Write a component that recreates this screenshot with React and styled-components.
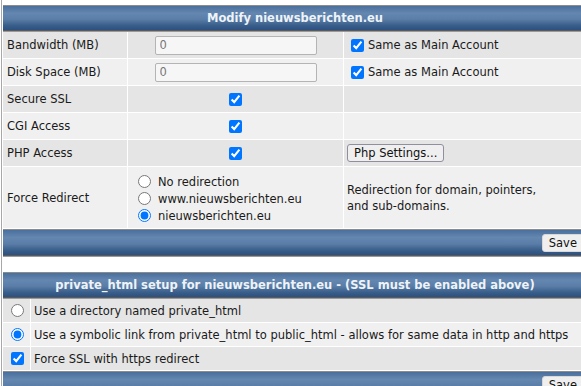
import styled, { createGlobalStyle } from "styled-components";

const GlobalStyle = createGlobalStyle`
  html, body {
    margin: 0;
    padding: 0;
    background: #fff;
    overflow: hidden;
  }
  body {
    font-family: "DejaVu Sans", Verdana, sans-serif;
    font-size: 11.5px;
    color: #1a1a1a;
  }
`;

const redirectOptions = [
  { id: "none", label: "No redirection" },
  { id: "www", label: "www.nieuwsberichten.eu" },
  { id: "plain", label: "nieuwsberichten.eu" },
];

export default function App() {
  return (
    <Page>
      <GlobalStyle />
      <Panel>
        <HeaderBar>Modify nieuwsberichten.eu</HeaderBar>
        <Grid>
          <Row $shade>
            <LabelCell>Bandwidth (MB)</LabelCell>
            <CenterCell>
              <TextInput defaultValue="0" />
            </CenterCell>
            <SideCell>
              <Check defaultChecked />
              Same as Main Account
            </SideCell>
          </Row>
          <Row>
            <LabelCell>Disk Space (MB)</LabelCell>
            <CenterCell>
              <TextInput defaultValue="0" />
            </CenterCell>
            <SideCell>
              <Check defaultChecked />
              Same as Main Account
            </SideCell>
          </Row>
          <Row $shade>
            <LabelCell>Secure SSL</LabelCell>
            <CenterCell>
              <Check defaultChecked />
            </CenterCell>
            <SideCell />
          </Row>
          <Row>
            <LabelCell>CGI Access</LabelCell>
            <CenterCell>
              <Check defaultChecked />
            </CenterCell>
            <SideCell />
          </Row>
          <Row $shade>
            <LabelCell>PHP Access</LabelCell>
            <CenterCell>
              <Check defaultChecked />
            </CenterCell>
            <SideCell>
              <SmallButton>Php Settings...</SmallButton>
            </SideCell>
          </Row>
          <Row>
            <LabelCell>Force Redirect</LabelCell>
            <RadioCell>
              {redirectOptions.map((opt) => (
                <RadioLine key={opt.id}>
                  <Radio
                    name="redirect"
                    defaultChecked={opt.id === "plain"}
                  />
                  {opt.label}
                </RadioLine>
              ))}
            </RadioCell>
            <SideCell>
              Redirection for domain, pointers,
              <br />
              and sub-domains.
            </SideCell>
          </Row>
        </Grid>
        <FooterBar>
          <SmallButton $save>Save</SmallButton>
        </FooterBar>
      </Panel>

      <Panel $gap>
        <HeaderBar>
          private_html setup for nieuwsberichten.eu - (SSL must be enabled
          above)
        </HeaderBar>
        <OptionRow $shade>
          <IconCell>
            <Radio name="private" />
          </IconCell>
          <OptionText>Use a directory named private_html</OptionText>
        </OptionRow>
        <OptionRow>
          <IconCell>
            <Radio name="private" defaultChecked />
          </IconCell>
          <OptionText>
            Use a symbolic link from private_html to public_html - allows for
            same data in http and https
          </OptionText>
        </OptionRow>
        <OptionRow $shade>
          <IconCell>
            <Check defaultChecked />
          </IconCell>
          <OptionText>Force SSL with https redirect</OptionText>
        </OptionRow>
        <FooterBar>
          <SmallButton $save>Save</SmallButton>
        </FooterBar>
      </Panel>
    </Page>
  );
}

const Page = styled.div`
  margin-left: 1px;
  padding: 5px 0 0 1px;
  border-left: 1px solid #a8a8a8;
  min-height: 400px;
  width: 590px;
`;

const Panel = styled.div`
  width: 584px;
  margin-top: ${(p) => (p.$gap ? "16px" : "0")};
`;

const barGradient = `linear-gradient(
    to bottom,
    #4a6f9c 0%,
    #6487b0 30%,
    #5a7ea8 55%,
    #3a5f8a 80%,
    #2c5080 100%
  )`;

const HeaderBar = styled.div`
  height: 24px;
  border-top: 1px solid #8c8c8c;
  border-bottom: 1px solid #5a5a5a;
  box-shadow: 0 1px 0 #9a9a9a;
  background: ${barGradient};
  color: #eef3f8;
  font-weight: bold;
  font-size: 11.5px;
  display: flex;
  align-items: center;
  justify-content: center;
  margin-bottom: 1px;
`;

const FooterBar = styled.div`
  height: 25px;
  border-top: 1px solid #8c8c8c;
  border-bottom: 1px solid #5a5a5a;
  box-shadow: 0 1px 0 #9a9a9a;
  background: ${barGradient};
  display: flex;
  align-items: center;
  justify-content: flex-end;
  padding-right: 1px;
`;

const Grid = styled.div`
  display: flex;
  flex-direction: column;
`;

const Row = styled.div`
  display: grid;
  grid-template-columns: 125px 216px 1fr;
  background: ${(p) => (p.$shade ? "#e5e5e5" : "#f0f0f0")};
  border-bottom: 1px solid #fff;
  min-height: 26px;
`;

const Cell = styled.div`
  display: flex;
  align-items: center;
  border-right: 1px solid #fff;
`;

const LabelCell = styled(Cell)`
  padding-left: 4px;
`;

const CenterCell = styled(Cell)`
  justify-content: center;
`;

const SideCell = styled(Cell)`
  border-right: none;
  padding-left: 3px;
  line-height: 16px;
`;

const RadioCell = styled(Cell)`
  flex-direction: column;
  align-items: flex-start;
  padding: 6px 0 4px 9px;
`;

const RadioLine = styled.label`
  display: flex;
  align-items: center;
  height: 17px;
`;

const TextInput = styled.input.attrs({ type: "text" })`
  width: 162px;
  height: 19px;
  box-sizing: border-box;
  border: 1px solid #b4b4b4;
  border-radius: 2px;
  background: #f6f6f6;
  color: #777;
  font-family: "DejaVu Sans", Verdana, sans-serif;
  font-size: 11.5px;
  padding: 0 4px;
  outline: none;
`;

const Check = styled.input.attrs({ type: "checkbox" })`
  width: 13px;
  height: 13px;
  margin: 0 4px 0 4px;
  accent-color: #0075ff;
`;

const Radio = styled.input.attrs({ type: "radio" })`
  width: 13px;
  height: 13px;
  margin: 0 7px 0 1px;
  accent-color: #0075ff;
`;

const SmallButton = styled.button`
  font-family: "DejaVu Sans", Verdana, sans-serif;
  font-size: 11.5px;
  color: #111;
  background: #efefef;
  border: 1px solid ${(p) => (p.$save ? "#d8d8d8" : "#8f8f9d")};
  border-radius: 3px;
  padding: 1px ${(p) => (p.$save ? "8px" : "6px")} 1px 6px;
  height: 18px;
  line-height: 14px;
`;

const OptionRow = styled.div`
  display: grid;
  grid-template-columns: 28px 1fr;
  background: ${(p) => (p.$shade ? "#e5e5e5" : "#f0f0f0")};
  border-bottom: 1px solid #fff;
  min-height: 23px;
`;

const IconCell = styled(Cell)`
  justify-content: center;
  padding-left: 1px;

  & > input {
    margin: 0;
  }
`;

const OptionText = styled.div`
  display: flex;
  align-items: center;
  padding-left: 3px;
`;
